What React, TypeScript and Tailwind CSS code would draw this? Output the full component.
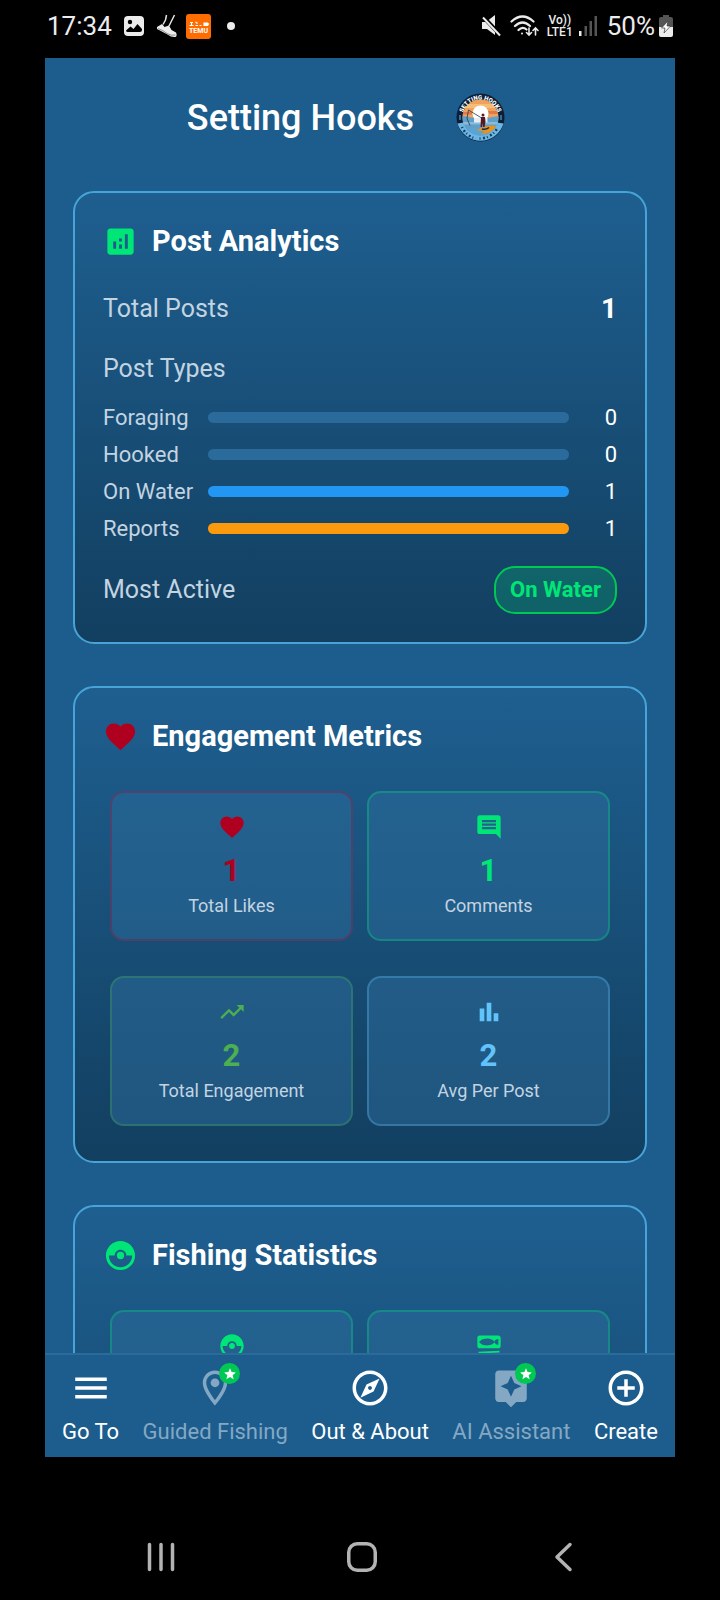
import type { ComponentType, ReactNode } from 'react'
import {
  MdAddCircleOutline,
  MdAnalytics,
  MdAssistant,
  MdCatchingPokemon,
  MdComment,
  MdFavorite,
  MdMenu,
  MdOutlineExplore,
  MdOutlineLocationOn,
  MdSetMeal,
  MdStar,
  MdTrendingUp,
} from 'react-icons/md'

type Icon = ComponentType<{ className?: string }>

function BarsIcon({ className }: { className?: string }) {
  return (
    <svg viewBox="0 0 24 24" className={className} fill="currentColor" aria-hidden="true">
      <path d="M4 9h4v11H4zM10 4h4v16h-4zM16 13h4v7h-4z" />
    </svg>
  )
}

function StatusBar() {
  return (
    <header className="flex h-[58px] shrink-0 items-center justify-between bg-black px-[47px] pb-1.5 text-[26px] leading-8 text-[#ececec]">
      <div className="flex items-center">
        <time>17:34</time>
        <svg viewBox="0 0 20 20" className="ml-3 size-5" aria-hidden="true">
          <rect width="20" height="20" rx="4" fill="#ececec" />
          <circle cx="6" cy="6" r="2.2" fill="#000" />
          <path d="M2 14.500 6.500 10.500 9.500 13 13.500 8 18 13v1q0 2-2 2H4q-2 0-2-1.500z" fill="#000" />
        </svg>
        <svg viewBox="0 0 22 24" className="ml-3 h-6 w-[22px]" fill="none" aria-hidden="true">
          <path d="M10.500 1 9.500 6 7 10.500M18.500 1 15.500 7 13 12" stroke="#e4e4e4" strokeWidth="1.500" />
          <path d="M1 13 6 10 8.500 13 13 11.500 15.500 16 20 18.500q1.500 3-.5 4.500-4 .5-8-2.500Q6 17.500 1 15z" fill="#ececec" />
          <path d="M2 14.500q5 1.500 9 5 4 2.500 8.500 1.500" stroke="#777" strokeWidth=".8" />
        </svg>
        <svg viewBox="0 0 25 25" className="ml-2 size-[25px]" aria-hidden="true">
          <rect width="25" height="25" rx="3" fill="#ff6d00" />
          <path d="M4 8.500h3M3.500 11.500h4M5.500 8v3.500M9.500 8l2 1.500M9.500 11.500h2.500M13.500 11.500h2M18 9h3.500l1 1-1 1.500H18z" stroke="#fff" strokeWidth="1.200" fill="#fff" />
          <text x="12.500" y="18.800" textAnchor="middle" className="font-['Roboto',sans-serif] text-[7px] font-bold" fill="#fff">TEMU</text>
        </svg>
        <span className="ml-4 size-2 rounded-full bg-[#ececec]" />
      </div>
      <div className="flex items-center">
        <svg viewBox="0 0 21 22" className="h-[22px] w-[21px]" aria-hidden="true">
          <path d="M1 7h4l9-7v20l-8-6H1z" fill="#ececec" />
          <path d="M1.500 1 20 20.500" stroke="#000" strokeWidth="4" />
          <path d="M2 2.500 19 20.500" stroke="#ececec" strokeWidth="2" />
        </svg>
        <svg viewBox="0 0 29 22" className="ml-2 h-[22px] w-[29px]" fill="none" stroke="#ececec" strokeLinecap="round" aria-hidden="true">
          <path d="M1.500 6.500Q12.500-3.500 23.500 6.500M5 11q7.500-7 15 0M8.500 15q4-4 8-.5" strokeWidth="2.200" />
          <circle cx="12" cy="18.500" r="1" fill="#ececec" stroke="none" />
          <path d="M19 13v7m-2.500-2.500L19 20l2.500-2.500M25.500 20v-7M23 15.500l2.500-2.500 2.500 2.500" strokeWidth="1.600" />
        </svg>
        <span className="ml-2 flex flex-col items-center text-[12px] leading-3 font-medium">
          <span>Vo))</span>
          <span>LTE1</span>
        </span>
        <svg viewBox="0 0 18 20" className="ml-1.5 h-5 w-[18px]" aria-hidden="true">
          <path d="M0 15h2.500v5H0z" fill="#ececec" />
          <path d="M5.500 10H8v10H5.500zM10.500 5H13v15h-2.500zM15.500 0H18v20h-2.500z" fill="#555" />
        </svg>
        <span className="ml-2.5">50%</span>
        <svg viewBox="0 0 14 22" className="ml-1 h-[22px] w-3.5" aria-hidden="true">
          <path d="M4 0h6v2h2q2 0 2 2v8H0V4q0-2 2-2h2z" fill="#555" />
          <path d="M0 12h14v8q0 2-2 2H2q-2 0-2-2z" fill="#ececec" />
          <path d="M9 6 2.500 13H6l-1 5 6.500-7H8z" fill="#fff" stroke="#333" strokeWidth=".7" />
        </svg>
      </div>
    </header>
  )
}

function Logo() {
  return (
    <svg viewBox="0 0 98 98" className="size-[49px]" role="img" aria-label="Setting Hooks logo">
      <defs>
        <clipPath id="scene">
          <circle cx="49" cy="49" r="36" />
        </clipPath>
        <path id="arc-top" d="M13 49a36 36 0 0 1 72 0" />
      </defs>
      <circle cx="49" cy="49" r="48" fill="#0b2038" />
      <path d="M3 61q46-9 92 0A48 48 0 0 1 3 61z" fill="#6db7e6" />
      <g clipPath="url(#scene)">
        <path d="M0 0h98v60H0z" fill="#f0a25c" />
        <path d="M10 22h78v8H10z" fill="#f7bd74" />
        <path d="M10 38h22v5H10zM64 36h26v6H64z" fill="#e07a4e" />
        <circle cx="49" cy="41" r="16" fill="#fff" />
        <path d="M0 48q12-4 25 0 24 5 49 0 12-3 24 0v50H0z" fill="#5f9fca" />
        <path d="M10 58h78v5H10z" fill="#87bbdc" />
        <path d="M36 50h27v9H36z" fill="#e4eef4" />
        <path d="M14 70h70v20H14z" fill="#5aa3d2" />
      </g>
      <path d="M41 74q24-12 39-8-6 15-31 17l9-6z" fill="#e8921f" />
      <path d="M52 72q8 2 14-3" stroke="#13283f" strokeWidth="3" fill="none" />
      <circle cx="54" cy="44" r="3" fill="#5b1620" />
      <path d="M50 48h8l1 10-2 10h-3l-1-8-1 8h-3z" fill="#5b1620" />
      <path d="M53 51 38 42 25 34M25 34l-3 17 6 14" stroke="#1b2d40" strokeWidth="1.500" fill="none" />
      <path d="M8 44v10M90 44v10" stroke="#6db7e6" strokeWidth="2" />
      <text fill="#fff" className="font-['Roboto',sans-serif] text-[12px] font-black">
        <textPath href="#arc-top" startOffset="50%" textAnchor="middle">SETTING HOOKS</textPath>
      </text>
      <path d="M12 68q8 18 28 23M47 91q23 0 37-22" stroke="#173b5c" strokeWidth="5" strokeDasharray="2 5 4 4" fill="none" />
    </svg>
  )
}

function Card({ icon: CardIcon, iconColor, title, children }: { icon: Icon; iconColor: string; title: string; children: ReactNode }) {
  return (
    <section className="rounded-[21px] border-2 border-[#48a4d6] bg-linear-to-b from-[#1e5f90] to-[#123f60] p-7">
      <h2 className="flex h-10 items-center gap-3.5 text-[29px] leading-10 font-bold text-white">
        <CardIcon className={`size-[35px] ${iconColor}`} />
        {title}
      </h2>
      {children}
    </section>
  )
}

const postTypes = [
  { name: 'Foraging', count: 0, color: 'bg-[#4caf50]' },
  { name: 'Hooked', count: 0, color: 'bg-[#00e676]' },
  { name: 'On Water', count: 1, color: 'bg-[#2196f3]' },
  { name: 'Reports', count: 1, color: 'bg-[#fb9a0c]' },
]

function PostAnalytics() {
  return (
    <Card icon={MdAnalytics} iconColor="text-[#00e676]" title="Post Analytics">
      <div className="mt-[30px] flex h-9 items-center justify-between">
        <span className="text-[25px] text-[#c3d4e1]">Total Posts</span>
        <span className="text-[28px] font-bold text-white">1</span>
      </div>
      <h3 className="mt-6 text-[25px] leading-9 text-[#c3d4e1]">Post Types</h3>
      <ul className="mt-3">
        {postTypes.map((type) => (
          <li key={type.name} className="flex h-[37px] items-center text-[22px]">
            <span className="w-[105px] shrink-0 text-[#c3d4e1]">{type.name}</span>
            <span className="h-[11px] flex-1 overflow-hidden rounded-full bg-[#2b6b9c]">
              <span className={`block h-full ${type.color}`} style={{ width: `${Math.min(type.count, 1) * 100}%` }} />
            </span>
            <span className="w-12 text-right text-white">{type.count}</span>
          </li>
        ))}
      </ul>
      <div className="mt-[19px] flex items-center justify-between">
        <span className="text-[25px] text-[#c3d4e1]">Most Active</span>
        <span className="rounded-[21px] border-2 border-[#00c853] bg-[#00e676]/20 px-3.5 py-2 text-[22px] leading-7 font-bold text-[#00e676]">
          On Water
        </span>
      </div>
    </Card>
  )
}

function Tile({ icon: TileIcon, color, border, value, label }: { icon: Icon; color: string; border: string; value?: string; label?: string }) {
  return (
    <div className={`flex h-[150px] flex-col items-center rounded-[14px] border-2 bg-[#2b6b9c]/50 pt-5 ${border}`}>
      <TileIcon className={`size-7 ${color}`} />
      <span className={`mt-3 text-[31px] leading-9 font-bold ${color}`}>{value}</span>
      <span className="mt-1.5 text-[18px] leading-[22px] text-[#c3d4e1]">{label}</span>
    </div>
  )
}

function TileGrid({ children }: { children: ReactNode }) {
  return <div className="mx-[7px] mt-[35px] mb-[7px] grid grid-cols-2 gap-x-3.5 gap-y-[35px]">{children}</div>
}

function NavItem({ icon: NavIcon, label, locked }: { icon: Icon; label: string; locked?: boolean }) {
  return (
    <button type="button" className={`flex flex-col items-center gap-[9px] text-[22px] leading-7 ${locked ? 'text-[#84a8c4]' : 'text-white'}`}>
      <span className="relative">
        <NavIcon className="size-[42px]" />
        {locked && (
          <span className="absolute -top-1 -right-1 flex size-[21px] items-center justify-center rounded-full bg-[#00c853] text-white">
            <MdStar className="size-3.5" />
          </span>
        )}
      </span>
      {label}
    </button>
  )
}

function SystemNav() {
  return (
    <nav aria-label="System" className="flex h-[143px] shrink-0 items-start bg-black pt-[85px] pr-14 pl-[60px] text-[#b3b3b3]">
      <button type="button" aria-label="Recent apps" className="flex flex-1 justify-center">
        <svg viewBox="0 0 30 30" className="size-[30px]" stroke="currentColor" strokeWidth="3.500" strokeLinecap="round">
          <path d="M3.500 2.500v25M15 2.500v25M26.500 2.500v25" />
        </svg>
      </button>
      <button type="button" aria-label="Home" className="flex flex-1 justify-center">
        <svg viewBox="0 0 30 30" className="size-[30px]" fill="none" stroke="currentColor" strokeWidth="3.500">
          <rect x="1.750" y="1.750" width="26.500" height="26.500" rx="8.500" />
        </svg>
      </button>
      <button type="button" aria-label="Back" className="flex flex-1 justify-center">
        <svg viewBox="0 0 30 30" className="size-[30px]" fill="none" stroke="currentColor" strokeWidth="3.500" strokeLinecap="round" strokeLinejoin="round">
          <path d="M22 2.500 9 15l13 12.500" />
        </svg>
      </button>
    </nav>
  )
}

export default function App() {
  return (
    <div className="flex h-screen flex-col bg-black font-['Roboto',sans-serif]">
      <StatusBar />
      <div className="mx-[45px] flex min-h-0 flex-1 flex-col bg-[#1c5d8d]">
        <main className="min-h-0 flex-1 overflow-hidden px-7">
          <div className="flex h-[133px] items-center justify-center gap-[42px] pr-7 pb-3.5">
            <h1 className="text-[36px] leading-[42px] font-medium text-white">Setting Hooks</h1>
            <Logo />
          </div>
          <div className="flex flex-col gap-[42px]">
            <PostAnalytics />
            <Card icon={MdFavorite} iconColor="text-[#b00020]" title="Engagement Metrics">
              <TileGrid>
                <Tile icon={MdFavorite} color="text-[#b00020]" border="border-[#b00020]/30" value="1" label="Total Likes" />
                <Tile icon={MdComment} color="text-[#00e676]" border="border-[#00e676]/30" value="1" label="Comments" />
                <Tile icon={MdTrendingUp} color="text-[#4caf50]" border="border-[#4caf50]/30" value="2" label="Total Engagement" />
                <Tile icon={BarsIcon} color="text-[#62c3fa]" border="border-[#62c3fa]/30" value="2" label="Avg Per Post" />
              </TileGrid>
            </Card>
            <Card icon={MdCatchingPokemon} iconColor="text-[#00e676]" title="Fishing Statistics">
              <TileGrid>
                <Tile icon={MdCatchingPokemon} color="text-[#00e676]" border="border-[#00e676]/30" />
                <Tile icon={MdSetMeal} color="text-[#00e676]" border="border-[#00e676]/30" />
                <Tile icon={MdTrendingUp} color="text-[#4caf50]" border="border-[#4caf50]/30" />
                <Tile icon={BarsIcon} color="text-[#62c3fa]" border="border-[#62c3fa]/30" />
              </TileGrid>
            </Card>
          </div>
        </main>
        <nav aria-label="Main" className="flex h-[104px] shrink-0 items-start justify-between border-t-2 border-[#2b6b9c] px-[17px] pt-3">
          <NavItem icon={MdMenu} label="Go To" />
          <NavItem icon={MdOutlineLocationOn} label="Guided Fishing" locked />
          <NavItem icon={MdOutlineExplore} label="Out &amp; About" />
          <NavItem icon={MdAssistant} label="AI Assistant" locked />
          <NavItem icon={MdAddCircleOutline} label="Create" />
        </nav>
      </div>
      <SystemNav />
    </div>
  )
}
